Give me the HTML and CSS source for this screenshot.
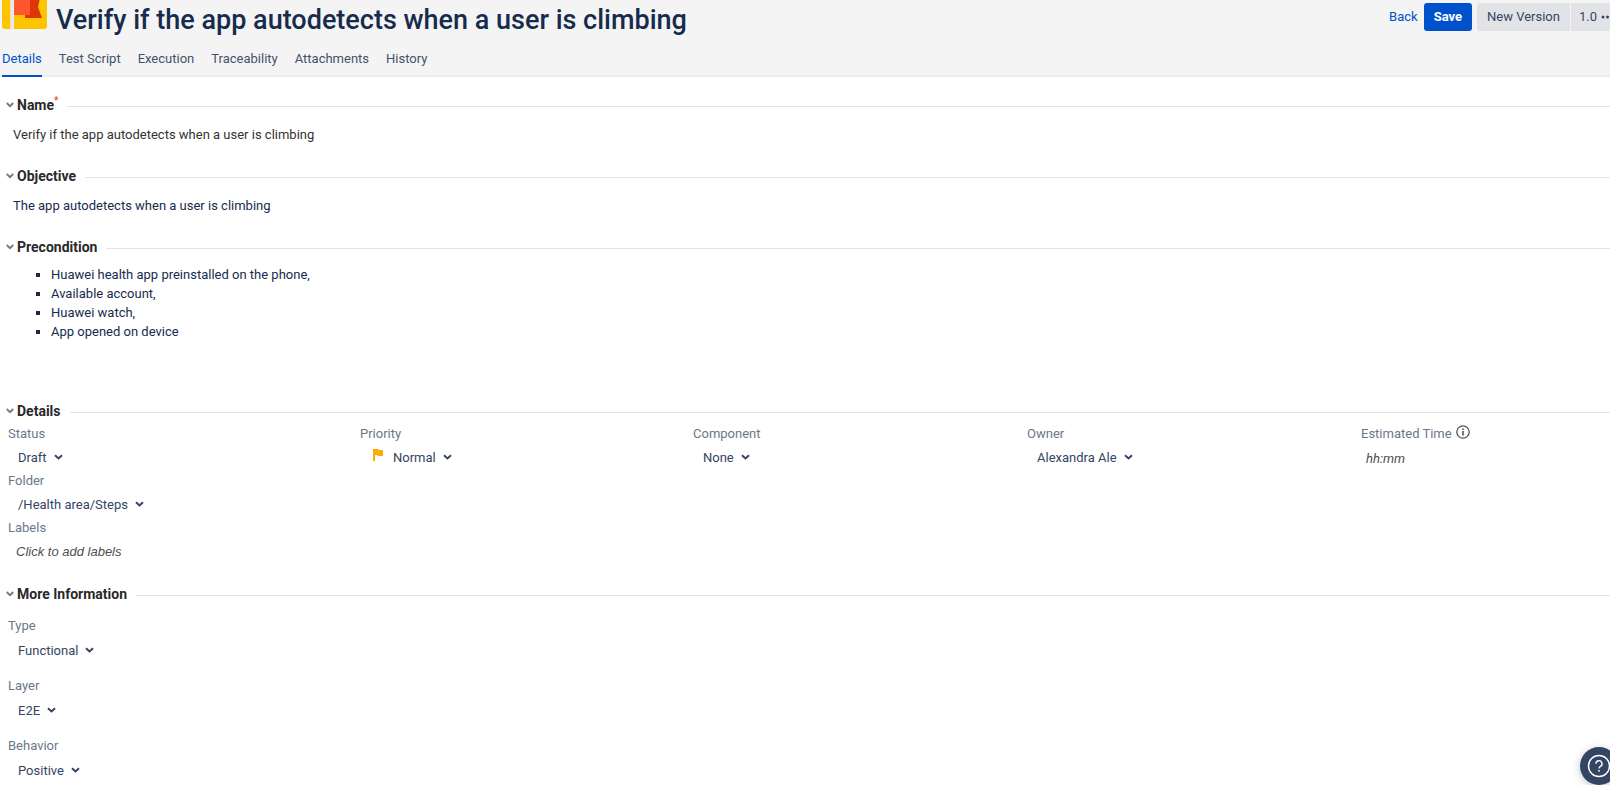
FILE: index.html
```html
<!DOCTYPE html>
<html lang="en">
<head>
<meta charset="utf-8">
<title>Verify if the app autodetects when a user is climbing</title>
<link rel="stylesheet" href="styles.css">
</head>
<body>
<svg class="defs" aria-hidden="true">
  <symbol id="chev" viewBox="0 0 9 6"><path d="M1 1.2 4.5 4.4 8 1.2" fill="none" stroke="currentColor" stroke-width="2"/></symbol>
  <symbol id="chev-thin" viewBox="0 0 8 6"><path d="M.8 1 4 4.2 7.2 1" fill="none" stroke="currentColor" stroke-width="1.8"/></symbol>
</svg>
<header class="header">
  <div class="topbar">
    <svg class="logo" viewBox="0 0 45 45" aria-hidden="true">
      <rect width="45" height="45" rx="3" fill="#ffc400"/>
      <rect x="8" width="2" height="45" fill="#ffe380"/>
      <rect x="9" width="3" height="45" fill="#deebff"/>
      <path d="M23 10h16l-3 13 4 11H23z" fill="#de350b"/>
      <path d="M12 10h16v21H12z" fill="#ff5630"/>
    </svg>
    <h1 class="title">Verify if the app autodetects when a user is climbing</h1>
    <div class="actions">
      <a class="back" href="#">Back</a>
      <button class="btn primary">Save</button>
      <div class="split">
        <button class="btn">New Version</button>
        <button class="btn version">1.0 <svg class="dots" viewBox="0 0 13 4" aria-hidden="true"><circle cx="2" cy="2" r="1.5"/><circle cx="6.5" cy="2" r="1.5"/><circle cx="11" cy="2" r="1.5"/></svg></button>
      </div>
    </div>
  </div>
  <nav class="tabs">
    <a class="tab active" href="#">Details</a>
    <a class="tab" href="#">Test Script</a>
    <a class="tab" href="#">Execution</a>
    <a class="tab" href="#">Traceability</a>
    <a class="tab" href="#">Attachments</a>
    <a class="tab" href="#">History</a>
  </nav>
</header>
<main class="main">
  <section class="section">
    <h2 class="heading"><svg class="fold"><use href="#chev-thin"/></svg><span>Name<sup class="required">*</sup></span></h2>
    <p class="text plain">Verify if the app autodetects when a user is climbing</p>
  </section>
  <section class="section">
    <h2 class="heading"><svg class="fold"><use href="#chev-thin"/></svg><span>Objective</span></h2>
    <p class="text">The app autodetects when a user is climbing</p>
  </section>
  <section class="section precondition">
    <h2 class="heading"><svg class="fold"><use href="#chev-thin"/></svg><span>Precondition</span></h2>
    <ul class="list">
      <li>Huawei health app preinstalled on the phone,</li>
      <li>Available account,</li>
      <li>Huawei watch,</li>
      <li>App opened on device</li>
    </ul>
  </section>
  <section class="section details">
    <h2 class="heading"><svg class="fold"><use href="#chev-thin"/></svg><span>Details</span></h2>
    <div class="grid">
      <div class="field">
        <label for="status">Status</label>
        <span class="pick"><select id="status"><option>Draft</option></select><svg class="chev"><use href="#chev"/></svg></span>
      </div>
      <div class="field">
        <label for="priority">Priority</label>
        <div class="flagged">
          <svg class="flag" viewBox="0 0 10 12" aria-hidden="true"><path d="M0 0h5l1 1h4v6H5L4 6H2v6H0z" fill="#ffab00"/></svg>
          <span class="pick"><select id="priority"><option>Normal</option></select><svg class="chev"><use href="#chev"/></svg></span>
        </div>
      </div>
      <div class="field">
        <label for="component">Component</label>
        <span class="pick"><select id="component"><option>None</option></select><svg class="chev"><use href="#chev"/></svg></span>
      </div>
      <div class="field">
        <label for="owner">Owner</label>
        <span class="pick"><select id="owner"><option>Alexandra Ale</option></select><svg class="chev"><use href="#chev"/></svg></span>
      </div>
      <div class="field">
        <label for="time">Estimated Time <svg class="info" viewBox="0 0 14 14" aria-hidden="true"><circle cx="7" cy="7" r="6.2" fill="none" stroke="currentColor" stroke-width="1.3"/><path d="M7 6v4.4M7 3.4v1.5" stroke="currentColor" stroke-width="1.6"/></svg></label>
        <input class="entry" id="time" type="text" placeholder="hh:mm">
      </div>
      <div class="field">
        <label for="folder">Folder</label>
        <span class="pick"><select id="folder"><option>/Health area/Steps</option></select><svg class="chev"><use href="#chev"/></svg></span>
      </div>
      <div class="field first">
        <label for="labels">Labels</label>
        <input class="entry labels" id="labels" type="text" placeholder="Click to add labels">
      </div>
    </div>
  </section>
  <section class="section">
    <h2 class="heading"><svg class="fold"><use href="#chev-thin"/></svg><span>More Information</span></h2>
    <div class="stack">
      <div class="field">
        <label for="type">Type</label>
        <span class="pick"><select id="type"><option>Functional</option></select><svg class="chev"><use href="#chev"/></svg></span>
      </div>
      <div class="field">
        <label for="layer">Layer</label>
        <span class="pick"><select id="layer"><option>E2E</option></select><svg class="chev"><use href="#chev"/></svg></span>
      </div>
      <div class="field">
        <label for="behavior">Behavior</label>
        <span class="pick"><select id="behavior"><option>Positive</option></select><svg class="chev"><use href="#chev"/></svg></span>
      </div>
    </div>
  </section>
</main>
<button class="help" aria-label="Help"><svg viewBox="0 0 24 24" aria-hidden="true"><circle cx="12" cy="12" r="10.5"/><path d="M9 9.8a3 3 0 1 1 4.4 2.5c-1 .6-1.4 1-1.4 2.2M12 16v1.8"/></svg></button>
</body>
</html>
```
FILE: styles.css
```css
* { box-sizing: border-box; }
body {
  margin: 0;
  overflow: hidden;
  background: #fff;
  color: #172b4d;
  font: 13px/19px Roboto, "Open Sans", sans-serif;
}
h1, h2, p, ul { margin: 0; }
.defs { position: absolute; width: 0; height: 0; }
button, select, input { font: inherit; color: inherit; border: 0; background: none; margin: 0; }

.header { background: #f4f4f4; border-bottom: 2px solid #ebecf0; }
.topbar { display: flex; height: 39px; }
.logo { flex: none; width: 45px; height: 45px; margin: -16px 9px 0 2px; }
.title { flex: 1; font-size: 27px; line-height: 41px; font-weight: 500; white-space: nowrap; }
.actions { display: flex; align-items: flex-start; margin-right: -4px; padding-top: 3px; line-height: 28px; }
.back { margin-right: 6px; color: #0052cc; text-decoration: none; }
.btn { height: 28px; padding: 0 10px; background: #e2e3e7; color: #344563; border-radius: 3px 0 0 3px; line-height: 28px; }
.primary { margin-right: 5px; background: #0052cc; color: #fff; font-weight: 700; border-radius: 3px; }
.split { display: flex; gap: 1px; }
.version { display: flex; align-items: center; gap: 4px; padding: 0 0 0 8px; border-radius: 0; }
.dots { width: 13px; height: 4px; fill: currentColor; }

.tabs { display: flex; gap: 17px; height: 36px; padding-left: 2px; }
.tab { height: 38px; line-height: 40px; color: #42526e; text-decoration: none; }
.active { color: #0052cc; border-bottom: 2px solid #0052cc; }

.main { padding-top: 18px; }
.section { margin-bottom: 22px; }
.heading { display: flex; align-items: center; height: 20px; font-size: 14px; line-height: 20px; font-weight: 700; color: #292929; }
.heading::after { content: ""; flex: 1; height: 1px; margin: 2px 0 0 9px; background: #e2e3e3; }
.fold { width: 8px; height: 6px; margin: 0 3px 0 6px; color: #777; }
.required { font-size: 10px; line-height: 0; font-weight: 400; color: #de350b; }
.text { padding: 10px 13px 0; }
.plain { color: #333; }
.list { padding: 8px 0 0 51px; list-style: square; }
.precondition { margin-bottom: 60px; }

.grid { display: grid; grid-template-columns: 352fr 333fr 334fr 334fr 249fr; row-gap: 1px; padding: 3px 0 0 8px; }
.first { grid-column: 1; }
.field { display: flex; flex-direction: column; align-items: flex-start; }
.field label { display: flex; align-items: center; gap: 4px; height: 20px; line-height: 22px; color: #6b778c; }
.pick { display: inline-grid; align-items: center; height: 26px; color: #344563; }
.pick select { grid-area: 1 / 1; appearance: none; field-sizing: content; height: 26px; padding: 0 22px 0 10px; outline-offset: -2px; }
.chev { grid-area: 1 / 1; justify-self: end; width: 9px; height: 6px; margin-right: 6px; pointer-events: none; }
.flagged { display: flex; align-items: center; }
.flag { width: 10px; height: 12px; margin: 0 0 4px 13px; }
.info { width: 14px; height: 14px; margin-bottom: 4px; color: #555; }
.entry { height: 26px; padding: 2px 5px 0; font-style: italic; }
.entry::placeholder { color: #505050; opacity: 1; }
.labels { padding: 0 8px; font-family: "Liberation Sans", Arial, sans-serif; font-size: 13px; }
.details { margin-bottom: 20px; }
.stack { display: grid; gap: 13px; padding: 12px 0 0 8px; }
.stack .field { gap: 1px; }

.help { position: fixed; right: -8px; bottom: 0; display: grid; place-items: center; width: 38px; height: 38px; padding: 0; border-radius: 50%; background: #344563; box-shadow: 0 2px 8px #091e4240; }
.help svg { width: 24px; height: 24px; fill: none; stroke: #fff; stroke-width: 1.4; }
```
